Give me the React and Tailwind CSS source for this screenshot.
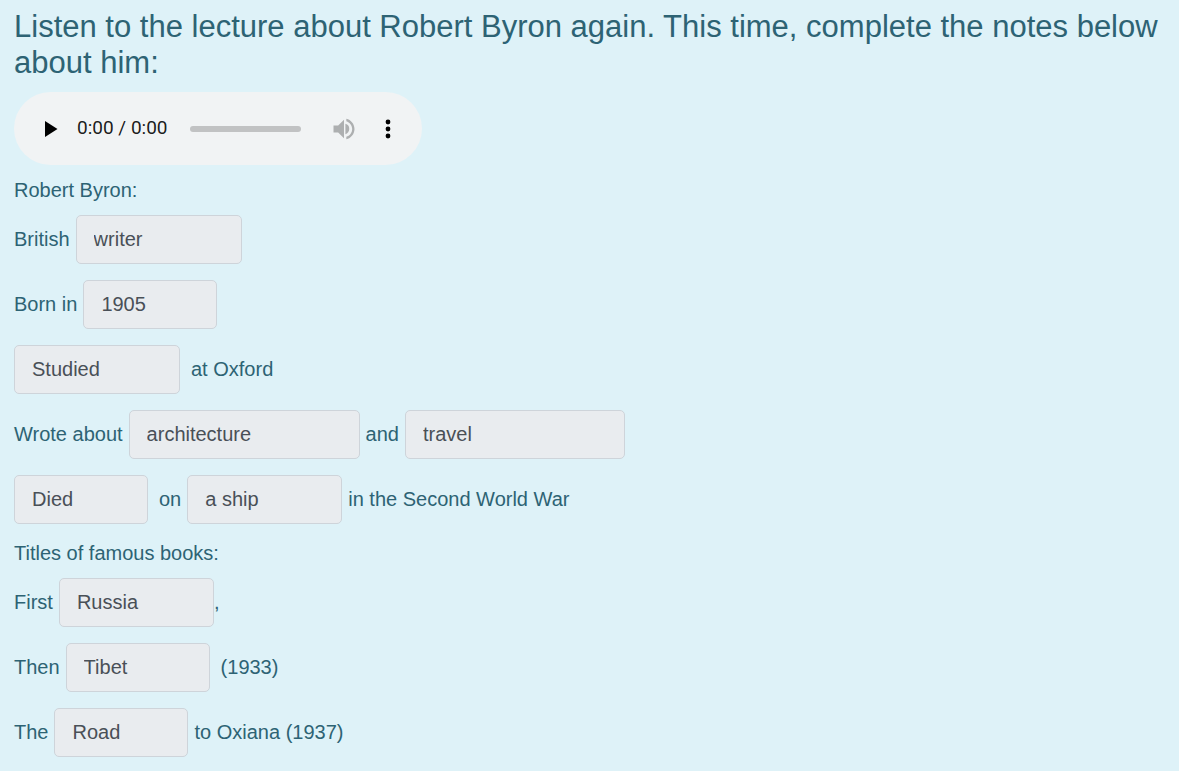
import { useState } from "react";

function Blank({ label, answer, className }) {
  const [value, setValue] = useState(answer);
  return (
    <input
      type="text"
      aria-label={label}
      value={value}
      onChange={(e) => setValue(e.target.value)}
      className={`h-[49px] rounded-[5px] border border-[#ced4da] bg-[#e9ecef] px-[17px] text-xl text-[#495057] ${className}`}
    />
  );
}

function Row({ children }) {
  return <p className="flex flex-wrap items-baseline gap-x-[6px]">{children}</p>;
}

function AudioPlayer() {
  return (
    <div className="mt-[11px] flex h-[73px] w-[408px] max-w-full items-center rounded-full bg-[#f1f3f4] pr-5 pl-6">
      <button type="button" aria-label="Play" className="flex size-6 items-center justify-center">
        <svg viewBox="0 0 24 24" className="size-6" fill="#000">
          <path d="M7 4v16l12.500-8z" />
        </svg>
      </button>
      <span className="ml-[15px] pb-[2px] font-['Roboto'] text-[19px] leading-6 whitespace-nowrap text-black/90">
        0:00 / 0:00
      </span>
      <input
        type="range"
        aria-label="Seek"
        min="0"
        max="100"
        defaultValue="0"
        className="ml-[22px] h-[6px] w-[110px] min-w-0 flex-1 appearance-none rounded-full bg-[#c1c2c3] [&::-webkit-slider-thumb]:size-0 [&::-webkit-slider-thumb]:appearance-none"
      />
      <button type="button" aria-label="Mute" className="ml-[29px] flex size-7 items-center justify-center">
        <svg viewBox="0 0 24 24" className="size-7" fill="#adafb0">
          <path d="M3 9v6h4l5 5V4L7 9H3zm13.500 3A4.500 4.500 0 0 0 13.200 7.600v8.800c1.900-.600 3.300-2.300 3.300-4.400zM14 3.230v2.060c2.890.860 5 3.540 5 6.710s-2.110 5.850-5 6.710v2.060c4.010-.910 7-4.490 7-8.770s-2.990-7.860-7-8.770z" />
        </svg>
      </button>
      <button type="button" aria-label="More options" className="ml-4 flex size-7 items-center justify-center">
        <svg viewBox="0 0 28 28" className="size-7" fill="#000">
          <circle cx="14" cy="7" r="2.400" />
          <circle cx="14" cy="14" r="2.400" />
          <circle cx="14" cy="21" r="2.400" />
        </svg>
      </button>
    </div>
  );
}

export default function App() {
  return (
    <main className="min-h-screen bg-[#def2f8] px-[14px] pt-[9px] pb-[14px] font-['Liberation_Sans',Arial,sans-serif] text-xl text-[#2d6374]">
      <h1 className="text-[31px] leading-9">
        Listen to the lecture about Robert Byron again. This time, complete the notes below about him:
      </h1>
      <AudioPlayer />

      <h2 className="mt-[10px] leading-[30px]">Robert Byron:</h2>
      <div className="mt-[10px] flex flex-col gap-4">
        <Row>
          <span>British</span>
          <Blank label="British occupation" answer="writer" className="w-[166px]" />
        </Row>
        <Row>
          <span>Born in</span>
          <Blank label="Year of birth" answer="1905" className="w-[134px]" />
        </Row>
        <Row>
          <Blank label="Activity at Oxford" answer="Studied" className="w-[166px]" />
          <span className="pl-[5px]">at Oxford</span>
        </Row>
        <Row>
          <span>Wrote about</span>
          <Blank label="First subject" answer="architecture" className="w-[231px]" />
          <span>and</span>
          <Blank label="Second subject" answer="travel" className="w-[220px]" />
        </Row>
        <Row>
          <Blank label="Event in the war" answer="Died" className="w-[134px]" />
          <span className="pl-[5px]">on</span>
          <Blank label="Place of the event" answer="a ship" className="w-[155px]" />
          <span>in the Second World War</span>
        </Row>
      </div>

      <h2 className="mt-[14px] leading-[30px]">Titles of famous books:</h2>
      <div className="mt-[10px] flex flex-col gap-4">
        <Row>
          <span>First</span>
          <span className="flex items-baseline">
            <Blank label="First title" answer="Russia" className="w-[155px]" />,
          </span>
        </Row>
        <Row>
          <span>Then</span>
          <Blank label="Second title" answer="Tibet" className="w-[144px]" />
          <span className="pl-[5px]">(1933)</span>
        </Row>
        <Row>
          <span>The</span>
          <Blank label="Word in the third title" answer="Road" className="w-[134px]" />
          <span>to Oxiana (1937)</span>
        </Row>
      </div>
    </main>
  );
}
